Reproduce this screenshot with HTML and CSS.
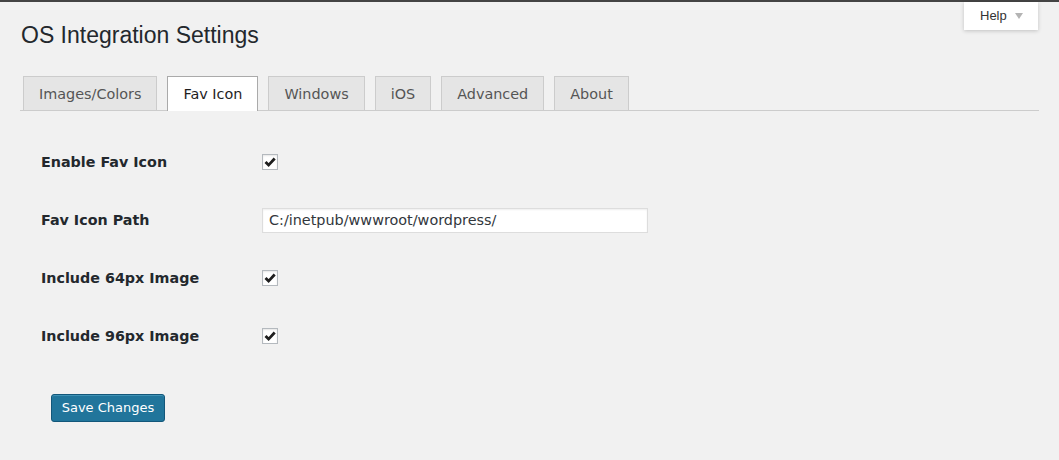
FILE: index.html
```html
<!DOCTYPE html>
<html>
<head>
<meta charset="utf-8">
<link rel="stylesheet" href="styles.css">
</head>
<body>
<div class="topbar"></div>
<div class="help-tab">Help <span class="arrow"></span></div>
<div class="wrap">
  <h1 class="title">OS Integration Settings</h1>
  <div class="tabs">
    <span class="tab">Images/Colors</span>
    <span class="tab active">Fav Icon</span>
    <span class="tab">Windows</span>
    <span class="tab">iOS</span>
    <span class="tab">Advanced</span>
    <span class="tab">About</span>
  </div>
  <div class="form">
    <div class="row">
      <div class="label">Enable Fav Icon</div>
      <div class="field"><span class="check"><svg viewBox="0 0 16 16" width="16" height="16"><path d="M3.5 8 L6.6 11.1 L12.7 4.5" fill="none" stroke="#1e1e1e" stroke-width="2.8"/></svg></span></div>
    </div>
    <div class="row">
      <div class="label">Fav Icon Path</div>
      <div class="field"><div class="input">C:/inetpub/wwwroot/wordpress/</div></div>
    </div>
    <div class="row">
      <div class="label">Include 64px Image</div>
      <div class="field"><span class="check"><svg viewBox="0 0 16 16" width="16" height="16"><path d="M3.5 8 L6.6 11.1 L12.7 4.5" fill="none" stroke="#1e1e1e" stroke-width="2.8"/></svg></span></div>
    </div>
    <div class="row">
      <div class="label">Include 96px Image</div>
      <div class="field"><span class="check"><svg viewBox="0 0 16 16" width="16" height="16"><path d="M3.5 8 L6.6 11.1 L12.7 4.5" fill="none" stroke="#1e1e1e" stroke-width="2.8"/></svg></span></div>
    </div>
    <div class="actions"><span class="button">Save Changes</span></div>
  </div>
</div>
</body>
</html>
```

FILE: styles.css
```css
html, body {
  margin: 0;
  padding: 0;
  background: #f1f1f1;
  height: 100%;
}
body {
  font-family: "DejaVu Sans", Verdana, sans-serif;
  color: #23282d;
  position: relative;
}
.topbar {
  height: 2px;
  background: #444;
}
.help-tab {
  position: absolute;
  top: 2px;
  right: 21px;
  width: 74px;
  height: 28px;
  box-sizing: border-box;
  background: #fff;
  box-shadow: 0 1px 4px rgba(0,0,0,0.2);
  font-family: "Liberation Sans", Arial, sans-serif;
  font-size: 13px;
  color: #333;
  padding-left: 16px;
  line-height: 28px;
}
.help-tab .arrow {
  display: inline-block;
  width: 0;
  height: 0;
  border-left: 4px solid transparent;
  border-right: 4px solid transparent;
  border-top: 6px solid #b4b4b4;
  margin-left: 5px;
  vertical-align: 1px;
}
.wrap {
  margin: 0 20px 0 20px;
}
.title {
  font-family: "Liberation Sans", Arial, sans-serif;
  font-weight: 400;
  font-size: 23px;
  line-height: 29px;
  margin: 19px 0 0 1px;
  color: #23282d;
}
.tabs {
  display: flex;
  gap: 10px;
  margin-top: 26px;
  padding-left: 3px;
  border-bottom: 1px solid #ccc;
}
.tab {
  display: block;
  border: 1px solid #ccc;
  border-bottom: none;
  background: #e5e5e5;
  color: #555;
  font-size: 14.4px;
  line-height: 20px;
  padding: 7px 15px 6px;
}
.tab.active {
  background: #fff;
  color: #1e1e1e;
  border-color: #aaa;
  margin-bottom: -1px;
  padding-bottom: 7px;
}
.form {
  padding: 22px 0 0 21px;
}
.row {
  display: flex;
  align-items: center;
  height: 58px;
}
.label {
  width: 221px;
  font-weight: 700;
  font-size: 14.3px;
  color: #23282d;
}
.field {
  display: flex;
  align-items: center;
}
.check {
  display: block;
  width: 16px;
  height: 16px;
  box-sizing: border-box;
  border: 1px solid #b4b9be;
  background: #fff;
  box-shadow: inset 0 1px 2px rgba(0,0,0,0.1);
  position: relative;
}
.check svg {
  position: absolute;
  left: -1px;
  top: -1px;
}
.input {
  width: 386px;
  height: 25px;
  box-sizing: border-box;
  border: 1px solid #ddd;
  background: #fff;
  box-shadow: inset 0 1px 2px rgba(0,0,0,0.07);
  font-size: 14.4px;
  line-height: 23px;
  padding: 0 6px;
  color: #32373c;
}
.actions {
  padding: 29px 0 0 10px;
}
.button {
  display: inline-block;
  width: 114px;
  height: 28px;
  box-sizing: border-box;
  background: #21759b;
  border: 1px solid #13577a;
  border-radius: 3px;
  box-shadow: inset 0 1px 0 rgba(120,200,230,0.35);
  color: #fff;
  font-size: 13px;
  line-height: 26px;
  text-align: center;
}
```
